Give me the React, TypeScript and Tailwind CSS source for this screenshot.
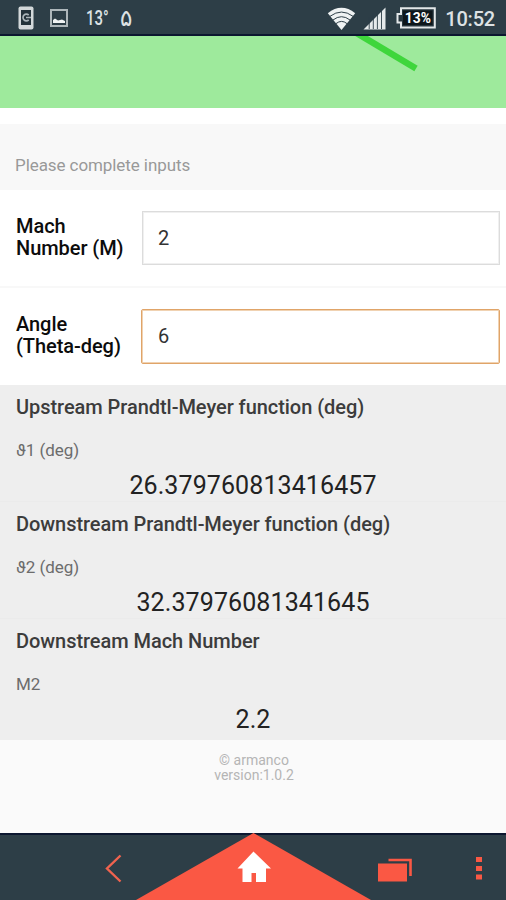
import { useState } from 'react';

interface Result {
  title: string;
  symbol: string;
  value: string;
}

const results: Result[] = [
  { title: 'Upstream Prandtl-Meyer function (deg)', symbol: 'ϑ1 (deg)', value: '26.379760813416457' },
  { title: 'Downstream Prandtl-Meyer function (deg)', symbol: 'ϑ2 (deg)', value: '32.37976081341645' },
  { title: 'Downstream Mach Number', symbol: 'M2', value: '2.2' },
];

function StatusBar() {
  return (
    <header className="flex h-9 shrink-0 items-center border-b-2 border-[#0c1730] bg-[#2d3e47] pl-[18px] pr-[11px] text-[#dde2e4]">
      <svg width="16" height="24" viewBox="0 0 16 24" className="mt-0.5">
        <rect x="0.5" y="0.5" width="15" height="23" rx="2" fill="#d3d8da" />
        <rect x="3" y="4" width="10" height="15" fill="#23323a" />
        <path d="M10.7 9.2A3.3 3.3 0 1 0 10.7 13.8M8 11.5H13" fill="none" stroke="#aab4b9" strokeWidth="1.7" />
      </svg>
      <svg width="18" height="18" viewBox="0 0 18 18" className="ml-4 mt-0.5">
        <rect x="1" y="1" width="16" height="16" fill="none" stroke="#aeb7bb" strokeWidth="2" />
        <path d="M3 14V11L5 9.5L8 11.5L12 10.5L15 12V14Z" fill="#f0f3f4" />
      </svg>
      <span className="ml-[18px] mt-0.5 w-[20px] origin-left scale-x-[0.71] whitespace-nowrap font-['Roboto',sans-serif] text-[21px] font-medium leading-none">13°</span>
      <span className="ml-[14px] mt-0.5 w-[14px] font-['DejaVu_Sans',sans-serif] text-[23px] leading-none">۵</span>
      <div className="ml-auto flex items-center">
        <svg width="29" height="24" viewBox="0 0 29 24" className="mt-1">
          <path d="M14.5 23L.8 6.2Q14.5-4.5 28.2 6.2Z" fill="#eff2f3" />
          <g fill="none" stroke="#2d3e47" strokeWidth="1">
            <path d="M3 9.3Q14.5.8 26 9.3" />
            <path d="M6 13Q14.5 6.4 23 13" />
            <path d="M9 16.6Q14.5 12.2 20 16.6" />
          </g>
        </svg>
        <svg width="23" height="23" viewBox="0 0 23 23" className="ml-[7px] mt-0.5">
          <path d="M.5 22.5L22.5.5V22.5Z" fill="#e6eaeb" />
          <path d="M6.2 10V22M10.3 6V22M14.4 3V22M18.5 0V22" stroke="#2d3e47" strokeWidth="0.9" />
        </svg>
        <div className="relative ml-[10px] mt-0.5 h-[22px] w-10">
          <svg width="40" height="22" viewBox="0 0 40 22">
            <path d="M5 1.2H38.8V20.5H5V15.5H1.5V7H5Z" fill="#26353d" stroke="#e3e7e9" strokeWidth="2" />
            <rect x="7" y="3.5" width="29.5" height="14.5" fill="#0d161b" />
          </svg>
          <span className="absolute inset-0 flex scale-x-[0.92] items-center justify-center pl-1 font-['Roboto',sans-serif] text-[15px] font-bold text-white">13%</span>
        </div>
        <span className="ml-[9px] mt-1 font-['Roboto',sans-serif] text-[20px] font-medium leading-none tracking-[-0.2px]">10:52</span>
      </div>
    </header>
  );
}

function InputRow({ label, value, onChange, active }: {
  label: string[];
  value: string;
  onChange: (value: string) => void;
  active?: boolean;
}) {
  return (
    <div className="flex h-[98px] items-center border-b-2 border-[#f8f8f8] bg-white pl-4 pr-1.5 last:h-[97px] last:border-b-0">
      <label className="w-[125px] shrink-0 pb-[3px] text-[20px] font-medium leading-[22px] tracking-[-0.06px] text-[#0c0c0c]">
        {label.map((line) => (
          <span key={line} className="block">{line}</span>
        ))}
      </label>
      <input
        value={value}
        onChange={(e) => onChange(e.target.value)}
        className={`min-w-0 flex-1 border bg-white text-[20px] text-[#333] outline-none ${
          active
            ? 'h-[55px] rounded-[2px] border-[#e0a468] pb-0.5 pl-4 shadow-[inset_0_0_0_1px_#f0d2b2]'
            : 'ml-px h-[54px] border-[#dcdcdc] pb-px pl-[15px] shadow-[inset_0_0_0_1px_#f0f0f0]'
        }`}
      />
    </div>
  );
}

function NavBar() {
  return (
    <nav className="h-[67px] shrink-0 border-t-2 border-[#0c1730] bg-[#2d3e47]">
      <svg width="506" height="67" viewBox="0 0 506 67" className="-mt-0.5 block">
        <path d="M253.5 0L371 67H136Z" fill="#fa5844" />
        <path d="M120.5 22.5L107 35.5L120.5 48.5" fill="none" stroke="#f0634f" strokeWidth="2.4" />
        <path d="M253.5 18.5L271 35.5H266V49H256V40H251.5V49H242.5V35.5H237.5Z" fill="#fff" />
        <path d="M378 30.5H407V48.5H378Z" fill="#fa5844" />
        <path d="M388.5 27H410.5V43" fill="none" stroke="#fa5844" strokeWidth="2.6" />
        <path d="M476 24H482V29H476ZM476 33H482V38H476ZM476 41.5H482V46.5H476Z" fill="#fa5844" />
      </svg>
    </nav>
  );
}

export default function App() {
  const [mach, setMach] = useState('2');
  const [angle, setAngle] = useState('6');

  return (
    <div className="flex h-[900px] w-[506px] flex-col overflow-hidden bg-[#fafafa] font-['Roboto',sans-serif]">
      <StatusBar />

      <div className="h-[72px] shrink-0 bg-[#9eea9c]">
        <svg width="506" height="72" viewBox="0 0 506 72">
          <path d="M354 -4.5L416 32.5" stroke="#3fd63c" strokeWidth="6.5" />
        </svg>
      </div>

      <div className="h-4 shrink-0 bg-white" />
      <p className="h-[66px] shrink-0 bg-[#f8f8f8] pl-[15px] pt-[29px] text-[17px] leading-6 tracking-[-0.08px] text-[#999]">
        Please complete inputs
      </p>

      <div className="shrink-0">
        <InputRow label={['Mach', 'Number (M)']} value={mach} onChange={setMach} />
        <InputRow label={['Angle', '(Theta-deg)']} value={angle} onChange={setAngle} active />
      </div>

      <div className="h-[355px] shrink-0 bg-[#eee]">
        {results.map((result) => (
          <section key={result.title} className="h-[117px] border-b border-[#ebebeb] px-4 pt-[9px] last:border-b-0">
            <h2 className="text-[20px] font-medium leading-[26px] tracking-[-0.05px] text-[#3c3c3c]">{result.title}</h2>
            <p className="mt-[20px] text-[17px] leading-5 tracking-[-0.05px] text-[#6c6c6c]">{result.symbol}</p>
            <p className="mt-[10px] text-center text-[25px] leading-8 tracking-[0.1px] text-[#222]">{result.value}</p>
          </section>
        ))}
      </div>

      <footer className="flex-1 pl-0.5 pt-[13px] text-center text-[14px] leading-[15px] text-[#b5b5b5]">
        <p>© armanco</p>
        <p>version:1.0.2</p>
      </footer>

      <NavBar />
    </div>
  );
}
